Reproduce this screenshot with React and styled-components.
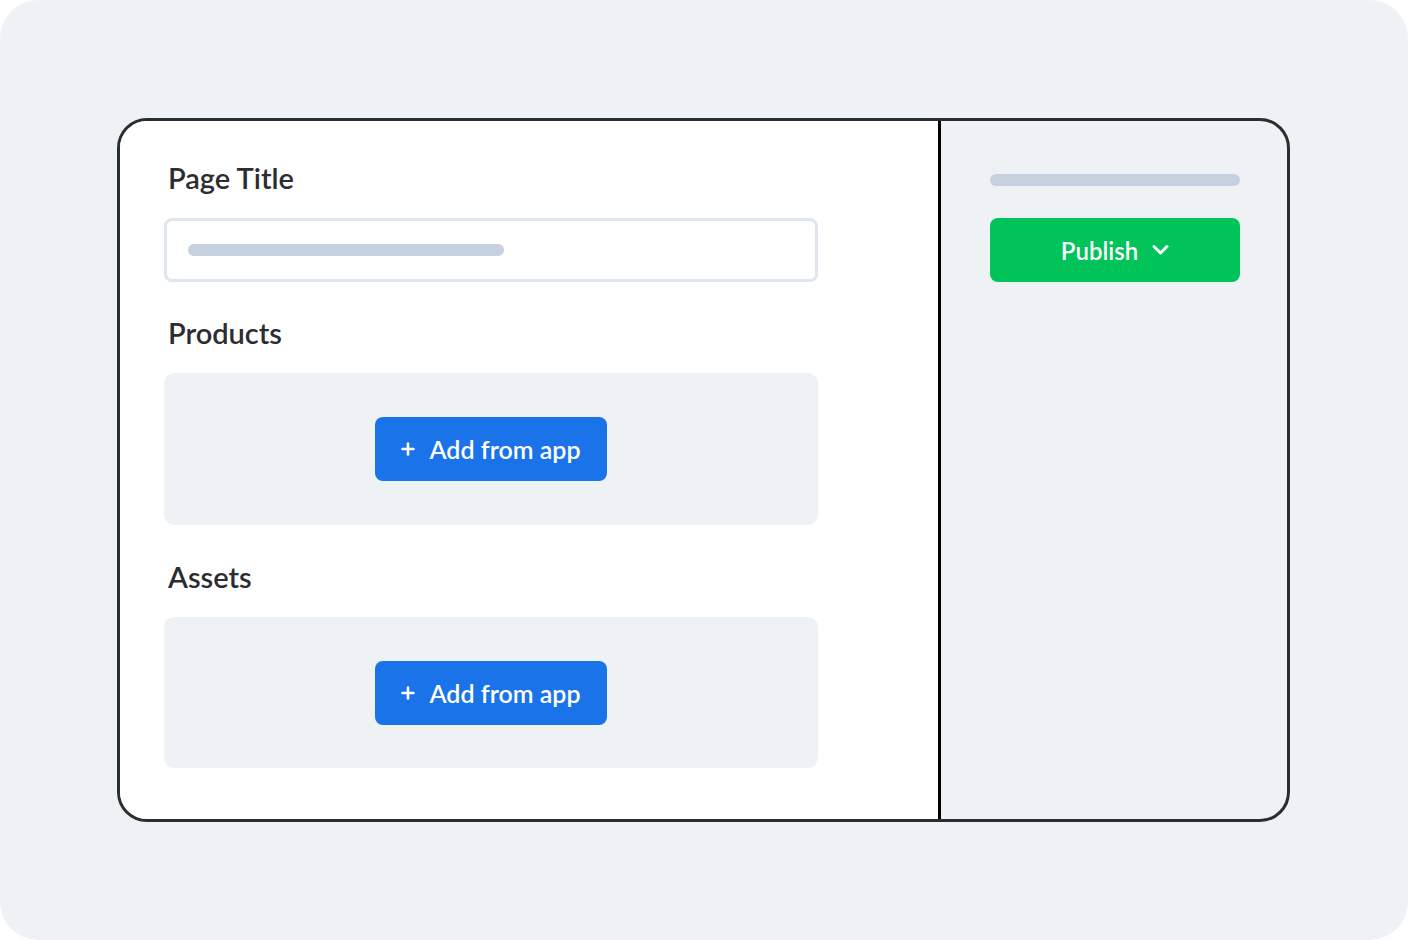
import React from 'react'
import styled, { createGlobalStyle } from 'styled-components'

const GlobalStyle = createGlobalStyle`
  html, body {
    margin: 0;
    padding: 0;
    background: #ffffff;
  }
  * {
    box-sizing: border-box;
  }
`

const Canvas = styled.div`
  width: 1408px;
  height: 940px;
  border-radius: 38px;
  background-color: #eff2f5;
  padding: 118px 118px 118px 117px;
  display: flex;
  font-family: "Lato", "Liberation Sans", sans-serif;
`

const Frame = styled.div`
  flex: 1;
  border: 3px solid #2b2d31;
  border-radius: 30px;
  overflow: hidden;
  display: flex;
  background-color: #eff2f5;
`

const Editor = styled.div`
  width: 821px;
  background-color: #ffffff;
  border-right: 3px solid #000000;
  padding: 44px 120px 0 44px;
  display: flex;
  flex-direction: column;
`

const Sidebar = styled.div`
  flex: 1;
  padding: 53px 47px 0 49px;
  display: flex;
  flex-direction: column;
  gap: 32px;
`

const Label = styled.h2`
  margin: ${({ top }) => top || 0}px 0 27px 4px;
  font-size: 29px;
  line-height: 26px;
  font-weight: 600;
  color: #2b2d31;
`

const TitleInput = styled.div`
  height: 64px;
  border: 3px solid #dfe6ee;
  border-radius: 8px;
  padding: 0 21px;
  display: flex;
  align-items: center;
`

const Placeholder = styled.div`
  width: ${({ width }) => width};
  height: 12px;
  border-radius: 6px;
  background-color: #c5d1de;
`

const DropZone = styled.div`
  height: ${({ height }) => height || '151px'};
  border-radius: 10px;
  background-color: #eff2f5;
  display: flex;
  align-items: center;
  justify-content: center;
`

const Button = styled.button`
  height: 64px;
  width: ${({ width }) => width};
  border: none;
  border-radius: 8px;
  background-color: ${({ bg }) => bg};
  color: #ffffff;
  font-family: inherit;
  font-size: ${({ size }) => size || '25px'};
  font-weight: 600;
  display: flex;
  align-items: center;
  justify-content: center;
  gap: 14px;
  cursor: pointer;
`

function Plus() {
  return (
    <svg width="14" height="14" viewBox="0 0 14 14" fill="none">
      <path d="M7 1.5 V12.5 M1.5 7 H12.5" stroke="#ffffff" strokeWidth="2.6" strokeLinecap="round" />
    </svg>
  )
}

function AddButton() {
  return (
    <Button width="232px" bg="#1a73e9">
      <Plus />
      <span>Add from app</span>
    </Button>
  )
}

function Chevron() {
  return (
    <svg width="17" height="12" viewBox="0 0 17 12" fill="none">
      <path d="M2 2.5 L8.5 9 L15 2.5" stroke="#ffffff" strokeWidth="3" strokeLinecap="round" strokeLinejoin="round" />
    </svg>
  )
}

export default function App() {
  return (
    <>
      <GlobalStyle />
      <Canvas>
        <Frame>
          <Editor>
            <Label>Page Title</Label>
            <TitleInput>
              <Placeholder width="316px" />
            </TitleInput>
            <Label top={38}>Products</Label>
            <DropZone height="152px">
              <AddButton />
            </DropZone>
            <Label top={39}>Assets</Label>
            <DropZone height="151px">
              <AddButton />
            </DropZone>
          </Editor>
          <Sidebar>
            <Placeholder width="100%" />
            <Button width="100%" bg="#00c35a" size="24px">
              <span>Publish</span>
              <Chevron />
            </Button>
          </Sidebar>
        </Frame>
      </Canvas>
    </>
  )
}
